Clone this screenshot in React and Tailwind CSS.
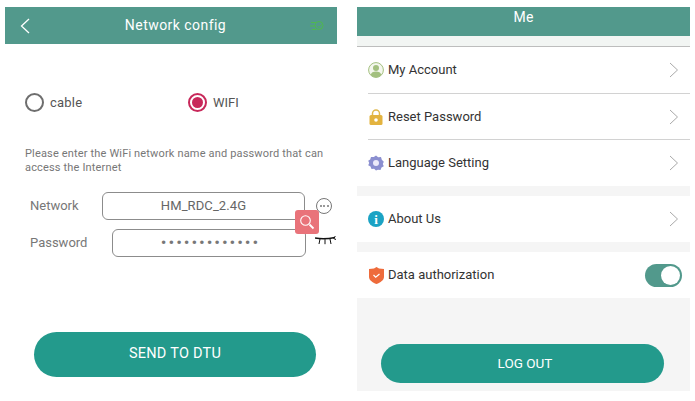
import React from "react";

const font = { fontFamily: "Roboto, sans-serif" };

function Chevron() {
  return (
    <svg width="10" height="16" viewBox="0 0 10 16" fill="none" className="shrink-0">
      <path d="M1 1l7.5 7L1 15" stroke="#a9a9a9" strokeWidth="1" />
    </svg>
  );
}

function AccountIcon() {
  return (
    <svg width="16" height="16" viewBox="0 0 16 16">
      <circle cx="8" cy="8" r="7.4" fill="#f4f7ee" stroke="#a3c07f" strokeWidth="1" />
      <circle cx="8" cy="6" r="3" fill="#a3c07f" />
      <path d="M2.6 13c.6-2.6 2.6-3.6 5.4-3.6s4.800 1 5.400 3.600A7 7 0 0 1 8 15.400 7 7 0 0 1 2.600 13z" fill="#a3c07f" />
    </svg>
  );
}

function LockIcon() {
  return (
    <svg width="14" height="16" viewBox="0 0 14 16">
      <path d="M3.500 7V4.500a3.500 3.500 0 0 1 7 0V7" fill="none" stroke="#e0b94e" strokeWidth="1.500" />
      <rect x="0.500" y="6" width="13" height="10" rx="1.500" fill="#e3b33f" />
      <circle cx="7" cy="11" r="1.800" fill="#fff" />
    </svg>
  );
}

function GearIcon() {
  return (
    <svg width="16" height="16" viewBox="0 0 16 16">
      <path d="M8 .5l2.200 1.700 2.800-.2.800 2.700 2 2-1 2.300 1 2.300-2.300 1.200-1 2.600-2.600-.3L8 15.500l-1.900-1.700-2.600.3-1-2.600L.2 10.300l1-2.300-1-2.300 2-1.200.8-2.600 2.800.2z" fill="#8b8fd0" />
      <circle cx="8" cy="8" r="3" fill="#eceafa" />
    </svg>
  );
}

function InfoIcon() {
  return (
    <div className="w-[16px] h-[16px] rounded-full bg-[#1ba3c4] flex items-center justify-center text-white text-[13px] font-bold leading-none" style={{ fontFamily: "'Liberation Serif', serif" }}>
      i
    </div>
  );
}

function ShieldIcon() {
  return (
    <svg width="15" height="17" viewBox="0 0 15 17">
      <path d="M7.500 0l2.500 1.500 5 .5v8c0 3-3.500 5.500-7.500 7C3.500 15.500 0 13 0 10V2l5-.5z" fill="#ee6b3b" />
      <path d="M4.500 8l2.200 2.200L10.500 7" fill="none" stroke="#fff" strokeWidth="1.200" />
    </svg>
  );
}

function Row({ icon, label, right, height = "h-[46px]", border }) {
  return (
    <div className={`ml-[11px] ${height} flex items-center justify-between pr-[11px] ${border ? "border-b border-[#d2d2d2]" : ""}`}>
      <div className="flex items-center gap-[4px]">
        <div className="w-[16px] flex justify-center">{icon}</div>
        <span className="text-[13px] text-[#333] tracking-[0px]">{label}</span>
      </div>
      {right}
    </div>
  );
}

function NetworkConfig() {
  return (
    <div className="w-[332px] h-[381px] bg-white flex flex-col">
      <div className="h-[37px] bg-[#52998c] flex items-center justify-between pl-[15px] pr-[11px]">
        <svg width="10" height="16" viewBox="0 0 10 16" fill="none">
          <path d="M9 1L1.500 8 9 15" stroke="#fff" strokeWidth="1.300" />
        </svg>
        <span className="text-white text-[14px] tracking-[0.45px] ml-[11px]">Network config</span>
        <svg width="16" height="14" viewBox="0 0 16 14" fill="none" stroke="#4fb84f" strokeWidth="1">
          <circle cx="9" cy="6.500" r="4" />
          <path d="M1 3.500h5M0 7h5M2 10.500h4M7.500 7l1.500 1.500 2.500-3" />
        </svg>
      </div>

      <div className="mt-[49px] flex items-center pl-[20px]">
        <div className="w-[163px] flex items-center gap-[6px]">
          <div className="w-[19px] h-[19px] rounded-full border-2 border-[#6e6e6e]" />
          <span className="text-[13px] text-[#555] tracking-[0.2px]">cable</span>
        </div>
        <div className="flex items-center gap-[6px]">
          <div className="w-[19px] h-[19px] rounded-full border-2 border-[#c8285a] flex items-center justify-center">
            <div className="w-[11px] h-[11px] rounded-full bg-[#c8285a]" />
          </div>
          <span className="text-[13px] text-[#555]">WIFI</span>
        </div>
      </div>

      <p className="mt-[34px] ml-[20px] w-[305px] text-[11px] leading-[14px] text-[#777] tracking-[0.16px]">
        Please enter the WiFi network name and password that can access the Internet
      </p>

      <div className="relative mt-[17px] ml-[25px] flex flex-col gap-[9px]">
        <div className="flex items-center h-[28px]">
          <span className="w-[72px] text-[13px] text-[#777]">Network</span>
          <div className="w-[203px] h-[28px] rounded-[6px] border border-[#8c8c8c] flex items-center justify-center text-[13px] text-[#666] tracking-[0.1px]">
            HM_RDC_2.4G
          </div>
          <div className="ml-[11px] w-[16px] h-[16px] rounded-full border border-[#777] flex items-center justify-center gap-[1.500px]">
            <i className="w-[2px] h-[2px] rounded-full bg-[#777]" />
            <i className="w-[2px] h-[2px] rounded-full bg-[#777]" />
            <i className="w-[2px] h-[2px] rounded-full bg-[#777]" />
          </div>
        </div>
        <div className="flex items-center h-[28px]">
          <span className="w-[82px] text-[13px] text-[#777]">Password</span>
          <div className="w-[194px] h-[28px] pl-[3px] rounded-[6px] border border-[#8c8c8c] flex items-center justify-center text-[17px] text-[#777] tracking-[1.900px]">
            •••••••••••••
          </div>
          <svg width="21" height="9" viewBox="0 0 21 9" fill="none" stroke="#111" strokeWidth="1" className="ml-[9px] -mt-[5px]">
            <path d="M0 2c6 1.200 12 1.200 20-.5" strokeWidth="1.500" />
            <path d="M5 3L4 8M10 3.200l0 5M15 3l1 5M18 2l2.500-1.500M18.500 2.500l2.500 1" />
          </svg>
        </div>
        <div className="absolute left-[265px] top-[18px] w-[24px] h-[24px] rounded-[3px] bg-[#e9737a] flex items-center justify-center">
          <svg width="16" height="16" viewBox="0 0 16 16" fill="none" stroke="#fff" strokeWidth="1.100">
            <circle cx="6.500" cy="6.500" r="4.800" />
            <path d="M10.500 10.500l4 4" strokeWidth="1.800" />
          </svg>
        </div>
      </div>

      <button className="mt-[75px] ml-[29px] w-[282px] h-[45px] rounded-full bg-[#239a8c] text-white text-[14.500px] tracking-[0.25px]">
        SEND TO DTU
      </button>
    </div>
  );
}

function Me() {
  return (
    <div className="w-[333px] h-[384px] bg-[#f5f5f5] flex flex-col">
      <div className="h-[29px] bg-[#52998c] flex justify-center text-white text-[14px] leading-[20px] tracking-[0.3px]">Me</div>
      <div className="h-[10px] bg-[#f2f5f3] border-b border-[#bdbdbd] box-content" />

      <div className="bg-white">
        <Row icon={<AccountIcon />} label="My Account" height="h-[47px]" right={<Chevron />} border />
        <Row icon={<LockIcon />} label="Reset Password" right={<Chevron />} border />
        <Row icon={<GearIcon />} label="Language Setting" right={<Chevron />} />
      </div>
      <div className="mt-[10px] bg-white">
        <Row icon={<InfoIcon />} label="About Us" right={<Chevron />} />
      </div>
      <div className="mt-[10px] bg-white">
        <Row
          icon={<ShieldIcon />}
          label="Data authorization"
          right={
            <div className="w-[37px] h-[23px] -mr-[3px] rounded-full bg-[#52998c] flex items-center justify-end pr-[2px]">
              <div className="w-[19px] h-[19px] rounded-full bg-white" />
            </div>
          }
        />
      </div>

      <button className="mt-[46px] ml-[24px] w-[283px] h-[39px] pl-[5px] rounded-full bg-[#239a8c] text-white text-[13.500px]">
        LOG OUT
      </button>
    </div>
  );
}

export default function App() {
  return (
    <div className="w-[695px] h-[401px] bg-white pt-[7px] pl-[5px] flex gap-[20px] overflow-hidden" style={font}>
      <NetworkConfig />
      <Me />
    </div>
  );
}
